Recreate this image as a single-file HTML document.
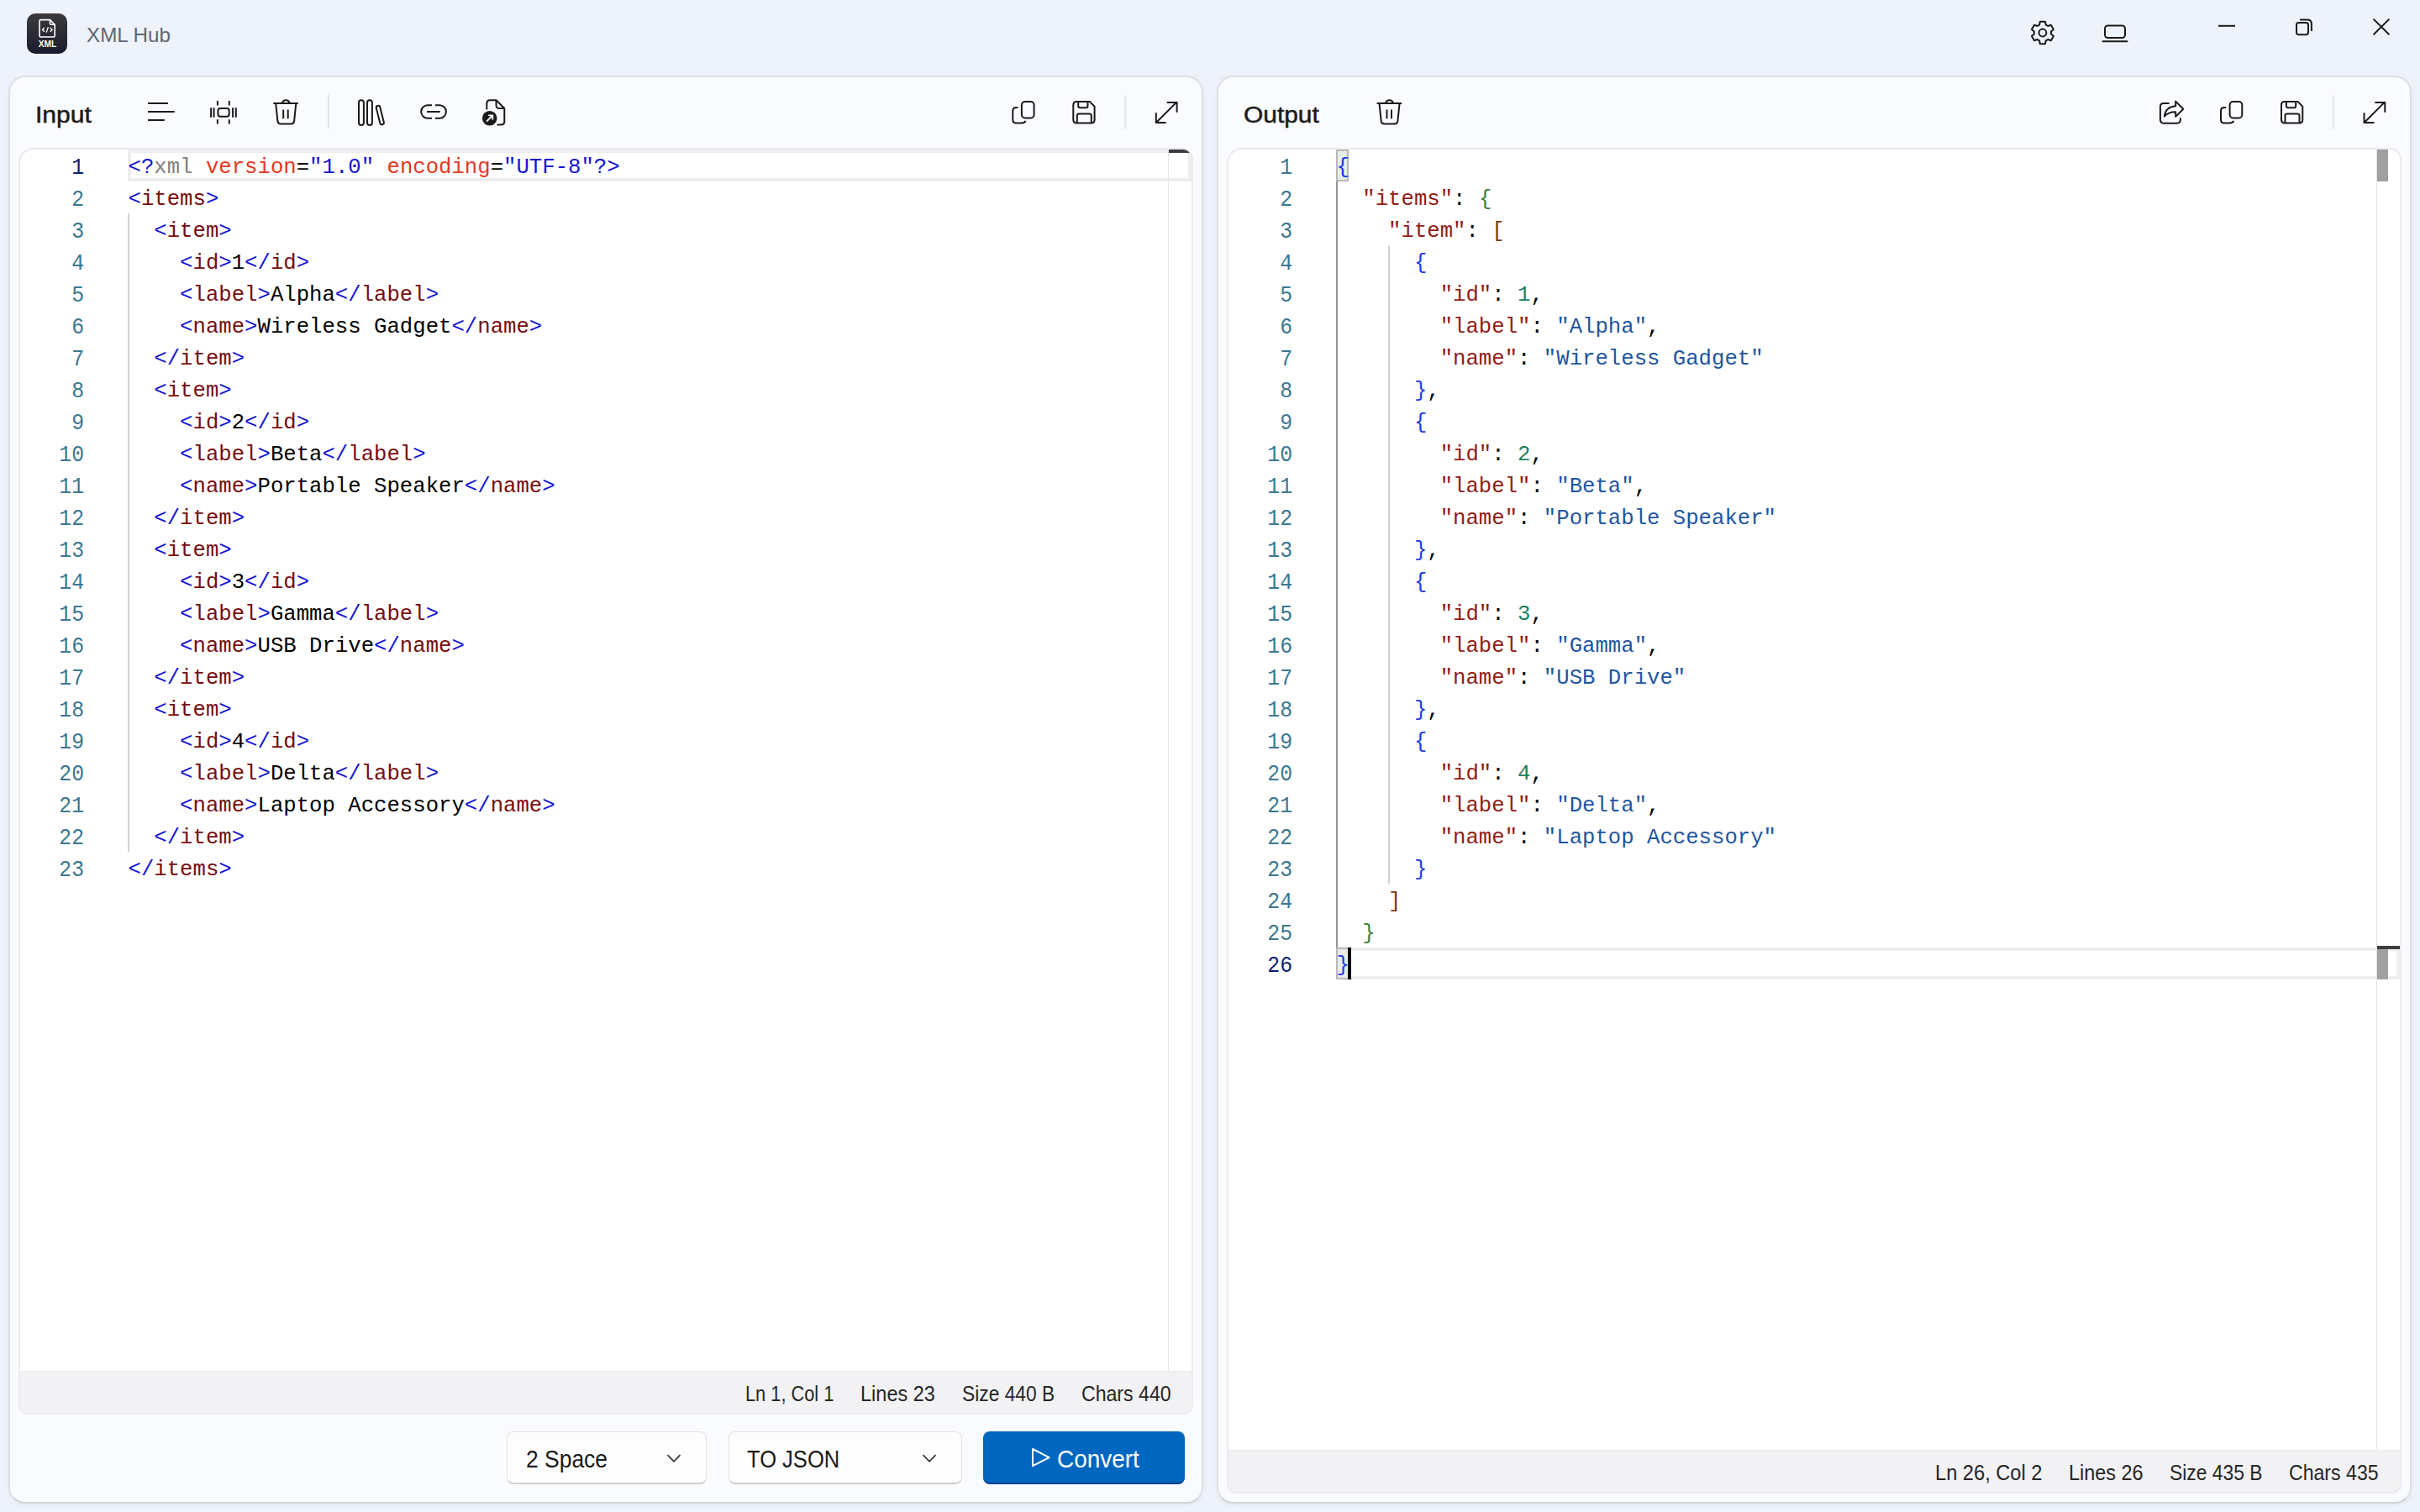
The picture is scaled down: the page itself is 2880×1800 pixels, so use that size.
<!DOCTYPE html>
<html><head><meta charset="utf-8">
<style>
html,body{margin:0;padding:0;}
body{width:2880px;height:1800px;overflow:hidden;position:relative;background:#eef2fa;font-family:"Liberation Sans",sans-serif;}
.abs{position:absolute;}
.panel{position:absolute;top:90px;width:1422px;height:1700px;box-sizing:border-box;background:#fafbfe;border:2px solid #dde0e6;border-bottom-color:#d0d3d8;border-radius:20px;box-shadow:0 2px 5px rgba(0,0,0,0.05);}
.editor{position:absolute;background:#fff;border:2px solid #ebebed;border-radius:18px 14px 12px 12px;overflow:hidden;box-sizing:border-box;}
.status{position:absolute;left:0;right:0;bottom:0;height:49px;background:#f2f2f4;border-top:1px solid #ececee;}
.code{position:absolute;font-family:"Liberation Mono",monospace;font-size:25.67px;white-space:pre;}
.ln{position:absolute;left:0;height:38px;line-height:38px;}
.nums{position:absolute;font-family:"Liberation Mono",monospace;font-size:27.5px;color:#3a7791;transform:scaleX(0.9);transform-origin:100% 0;}
.num{position:absolute;right:0;height:38px;line-height:38px;text-align:right;}
.num.act{color:#0b216f;}
.hdr{position:absolute;font-weight:bold;font-size:27px;color:#1a1a1a;}
.stat{position:absolute;font-size:24px;color:#1f1f1f;white-space:nowrap;}
.dd{position:absolute;top:1704px;height:63px;box-sizing:border-box;background:#fdfdfd;border:1px solid #e3e3e3;border-bottom:2px solid #d0d0d0;border-radius:8px;}
.ddt{position:absolute;font-size:28px;color:#1a1a1a;white-space:nowrap;}
</style></head>
<body>
<!-- title bar -->
<div class="abs" style="left:32px;top:16px;width:48px;height:48px;border-radius:10px;background:linear-gradient(#3a3a3c,#1b1b2e);"></div>

<!-- left panel -->
<div class="panel" style="left:10px;"></div>
<div class="panel" style="left:1448px;"></div>


<!-- left editor -->
<div class="editor" style="left:22px;top:176px;width:1398px;height:1508px;">
  <div class="status"></div>
</div>
<!-- right editor -->
<div class="editor" style="left:1460px;top:176px;width:1398px;height:1602px;">
  <div class="status"></div>
</div>

<!-- left code area -->
<div class="abs" style="left:24px;top:178px;width:1394px;height:1504px;border-radius:16px 10px 10px 10px;overflow:hidden;"><div class="abs" style="left:-24px;top:-178px;width:2880px;height:1800px;">
<div class="abs" style="left:152px;top:178px;width:1266px;height:38px;box-sizing:border-box;border:4px solid #eeeeee;"></div>
<div class="abs" style="left:151.5px;top:254px;width:2px;height:760px;background:#d3d3d3;"></div>
<div class="nums" style="left:41px;top:181px;width:59px;"><div class="num act" style="top:0px">1</div>
<div class="num" style="top:38px">2</div>
<div class="num" style="top:76px">3</div>
<div class="num" style="top:114px">4</div>
<div class="num" style="top:152px">5</div>
<div class="num" style="top:190px">6</div>
<div class="num" style="top:228px">7</div>
<div class="num" style="top:266px">8</div>
<div class="num" style="top:304px">9</div>
<div class="num" style="top:342px">10</div>
<div class="num" style="top:380px">11</div>
<div class="num" style="top:418px">12</div>
<div class="num" style="top:456px">13</div>
<div class="num" style="top:494px">14</div>
<div class="num" style="top:532px">15</div>
<div class="num" style="top:570px">16</div>
<div class="num" style="top:608px">17</div>
<div class="num" style="top:646px">18</div>
<div class="num" style="top:684px">19</div>
<div class="num" style="top:722px">20</div>
<div class="num" style="top:760px">21</div>
<div class="num" style="top:798px">22</div>
<div class="num" style="top:836px">23</div></div>
<div class="code" style="left:152.5px;top:181px;"><div class="ln" style="top:0px"><span style="color:#1414d4">&lt;?</span><span style="color:#808080">xml</span><span style="color:#000000"> </span><span style="color:#e3391f">version</span><span style="color:#000000">=</span><span style="color:#1414d4">&quot;1.0&quot;</span><span style="color:#000000"> </span><span style="color:#e3391f">encoding</span><span style="color:#000000">=</span><span style="color:#1414d4">&quot;UTF-8&quot;</span><span style="color:#1414d4">?&gt;</span></div>
<div class="ln" style="top:38px"><span style="color:#1414d4">&lt;</span><span style="color:#760d0d">items</span><span style="color:#1414d4">&gt;</span></div>
<div class="ln" style="top:76px"><span style="color:#1414d4">  &lt;</span><span style="color:#760d0d">item</span><span style="color:#1414d4">&gt;</span></div>
<div class="ln" style="top:114px"><span style="color:#1414d4">    &lt;</span><span style="color:#760d0d">id</span><span style="color:#1414d4">&gt;</span><span style="color:#000000">1</span><span style="color:#1414d4">&lt;/</span><span style="color:#760d0d">id</span><span style="color:#1414d4">&gt;</span></div>
<div class="ln" style="top:152px"><span style="color:#1414d4">    &lt;</span><span style="color:#760d0d">label</span><span style="color:#1414d4">&gt;</span><span style="color:#000000">Alpha</span><span style="color:#1414d4">&lt;/</span><span style="color:#760d0d">label</span><span style="color:#1414d4">&gt;</span></div>
<div class="ln" style="top:190px"><span style="color:#1414d4">    &lt;</span><span style="color:#760d0d">name</span><span style="color:#1414d4">&gt;</span><span style="color:#000000">Wireless Gadget</span><span style="color:#1414d4">&lt;/</span><span style="color:#760d0d">name</span><span style="color:#1414d4">&gt;</span></div>
<div class="ln" style="top:228px"><span style="color:#1414d4">  &lt;/</span><span style="color:#760d0d">item</span><span style="color:#1414d4">&gt;</span></div>
<div class="ln" style="top:266px"><span style="color:#1414d4">  &lt;</span><span style="color:#760d0d">item</span><span style="color:#1414d4">&gt;</span></div>
<div class="ln" style="top:304px"><span style="color:#1414d4">    &lt;</span><span style="color:#760d0d">id</span><span style="color:#1414d4">&gt;</span><span style="color:#000000">2</span><span style="color:#1414d4">&lt;/</span><span style="color:#760d0d">id</span><span style="color:#1414d4">&gt;</span></div>
<div class="ln" style="top:342px"><span style="color:#1414d4">    &lt;</span><span style="color:#760d0d">label</span><span style="color:#1414d4">&gt;</span><span style="color:#000000">Beta</span><span style="color:#1414d4">&lt;/</span><span style="color:#760d0d">label</span><span style="color:#1414d4">&gt;</span></div>
<div class="ln" style="top:380px"><span style="color:#1414d4">    &lt;</span><span style="color:#760d0d">name</span><span style="color:#1414d4">&gt;</span><span style="color:#000000">Portable Speaker</span><span style="color:#1414d4">&lt;/</span><span style="color:#760d0d">name</span><span style="color:#1414d4">&gt;</span></div>
<div class="ln" style="top:418px"><span style="color:#1414d4">  &lt;/</span><span style="color:#760d0d">item</span><span style="color:#1414d4">&gt;</span></div>
<div class="ln" style="top:456px"><span style="color:#1414d4">  &lt;</span><span style="color:#760d0d">item</span><span style="color:#1414d4">&gt;</span></div>
<div class="ln" style="top:494px"><span style="color:#1414d4">    &lt;</span><span style="color:#760d0d">id</span><span style="color:#1414d4">&gt;</span><span style="color:#000000">3</span><span style="color:#1414d4">&lt;/</span><span style="color:#760d0d">id</span><span style="color:#1414d4">&gt;</span></div>
<div class="ln" style="top:532px"><span style="color:#1414d4">    &lt;</span><span style="color:#760d0d">label</span><span style="color:#1414d4">&gt;</span><span style="color:#000000">Gamma</span><span style="color:#1414d4">&lt;/</span><span style="color:#760d0d">label</span><span style="color:#1414d4">&gt;</span></div>
<div class="ln" style="top:570px"><span style="color:#1414d4">    &lt;</span><span style="color:#760d0d">name</span><span style="color:#1414d4">&gt;</span><span style="color:#000000">USB Drive</span><span style="color:#1414d4">&lt;/</span><span style="color:#760d0d">name</span><span style="color:#1414d4">&gt;</span></div>
<div class="ln" style="top:608px"><span style="color:#1414d4">  &lt;/</span><span style="color:#760d0d">item</span><span style="color:#1414d4">&gt;</span></div>
<div class="ln" style="top:646px"><span style="color:#1414d4">  &lt;</span><span style="color:#760d0d">item</span><span style="color:#1414d4">&gt;</span></div>
<div class="ln" style="top:684px"><span style="color:#1414d4">    &lt;</span><span style="color:#760d0d">id</span><span style="color:#1414d4">&gt;</span><span style="color:#000000">4</span><span style="color:#1414d4">&lt;/</span><span style="color:#760d0d">id</span><span style="color:#1414d4">&gt;</span></div>
<div class="ln" style="top:722px"><span style="color:#1414d4">    &lt;</span><span style="color:#760d0d">label</span><span style="color:#1414d4">&gt;</span><span style="color:#000000">Delta</span><span style="color:#1414d4">&lt;/</span><span style="color:#760d0d">label</span><span style="color:#1414d4">&gt;</span></div>
<div class="ln" style="top:760px"><span style="color:#1414d4">    &lt;</span><span style="color:#760d0d">name</span><span style="color:#1414d4">&gt;</span><span style="color:#000000">Laptop Accessory</span><span style="color:#1414d4">&lt;/</span><span style="color:#760d0d">name</span><span style="color:#1414d4">&gt;</span></div>
<div class="ln" style="top:798px"><span style="color:#1414d4">  &lt;/</span><span style="color:#760d0d">item</span><span style="color:#1414d4">&gt;</span></div>
<div class="ln" style="top:836px"><span style="color:#1414d4">&lt;/</span><span style="color:#760d0d">items</span><span style="color:#1414d4">&gt;</span></div></div>
<div class="abs" style="left:1390px;top:177px;width:1px;height:1455px;background:#e4e4e4;"></div>
<div class="abs" style="left:1391px;top:178px;width:27px;height:4px;background:#3c3c3c;"></div>
</div></div>

<!-- right code area -->
<div class="abs" style="left:1462px;top:178px;width:1394px;height:1598px;border-radius:16px 10px 10px 10px;overflow:hidden;"><div class="abs" style="left:-1462px;top:-178px;width:2880px;height:1800px;">
<div class="abs" style="left:1590px;top:1128px;width:1266px;height:38px;box-sizing:border-box;border:4px solid #eeeeee;"></div>
<div class="abs" style="left:1590px;top:178px;width:15.4px;height:38px;box-sizing:border-box;border:2px solid #b9b9b9;background:#e5efe5;"></div>
<div class="abs" style="left:1590px;top:1128px;width:15.4px;height:38px;box-sizing:border-box;border:2px solid #b9b9b9;border-right-width:0;background:#e7ede7;"></div>
<div class="abs" style="left:1590px;top:216px;width:2px;height:912px;background:#939393;"></div>
<div class="abs" style="left:1651.6px;top:292px;width:2px;height:760px;background:#d3d3d3;"></div>
<div class="nums" style="left:1479px;top:181px;width:59px;"><div class="num" style="top:0px">1</div>
<div class="num" style="top:38px">2</div>
<div class="num" style="top:76px">3</div>
<div class="num" style="top:114px">4</div>
<div class="num" style="top:152px">5</div>
<div class="num" style="top:190px">6</div>
<div class="num" style="top:228px">7</div>
<div class="num" style="top:266px">8</div>
<div class="num" style="top:304px">9</div>
<div class="num" style="top:342px">10</div>
<div class="num" style="top:380px">11</div>
<div class="num" style="top:418px">12</div>
<div class="num" style="top:456px">13</div>
<div class="num" style="top:494px">14</div>
<div class="num" style="top:532px">15</div>
<div class="num" style="top:570px">16</div>
<div class="num" style="top:608px">17</div>
<div class="num" style="top:646px">18</div>
<div class="num" style="top:684px">19</div>
<div class="num" style="top:722px">20</div>
<div class="num" style="top:760px">21</div>
<div class="num" style="top:798px">22</div>
<div class="num" style="top:836px">23</div>
<div class="num" style="top:874px">24</div>
<div class="num" style="top:912px">25</div>
<div class="num act" style="top:950px">26</div></div>
<div class="code" style="left:1590.5px;top:181px;"><div class="ln" style="top:0px"><span style="color:#1c3ae0">{</span></div>
<div class="ln" style="top:38px"><span style="color:#000000">  </span><span style="color:#8f1d16">&quot;items&quot;</span><span style="color:#000000">: </span><span style="color:#3b7f3b">{</span></div>
<div class="ln" style="top:76px"><span style="color:#000000">    </span><span style="color:#8f1d16">&quot;item&quot;</span><span style="color:#000000">: </span><span style="color:#7b3814">[</span></div>
<div class="ln" style="top:114px"><span style="color:#000000">      </span><span style="color:#1c3ae0">{</span></div>
<div class="ln" style="top:152px"><span style="color:#000000">        </span><span style="color:#8f1d16">&quot;id&quot;</span><span style="color:#000000">: </span><span style="color:#1f8060">1</span><span style="color:#000000">,</span></div>
<div class="ln" style="top:190px"><span style="color:#000000">        </span><span style="color:#8f1d16">&quot;label&quot;</span><span style="color:#000000">: </span><span style="color:#1f55a0">&quot;Alpha&quot;</span><span style="color:#000000">,</span></div>
<div class="ln" style="top:228px"><span style="color:#000000">        </span><span style="color:#8f1d16">&quot;name&quot;</span><span style="color:#000000">: </span><span style="color:#1f55a0">&quot;Wireless Gadget&quot;</span></div>
<div class="ln" style="top:266px"><span style="color:#000000">      </span><span style="color:#1c3ae0">}</span><span style="color:#000000">,</span></div>
<div class="ln" style="top:304px"><span style="color:#000000">      </span><span style="color:#1c3ae0">{</span></div>
<div class="ln" style="top:342px"><span style="color:#000000">        </span><span style="color:#8f1d16">&quot;id&quot;</span><span style="color:#000000">: </span><span style="color:#1f8060">2</span><span style="color:#000000">,</span></div>
<div class="ln" style="top:380px"><span style="color:#000000">        </span><span style="color:#8f1d16">&quot;label&quot;</span><span style="color:#000000">: </span><span style="color:#1f55a0">&quot;Beta&quot;</span><span style="color:#000000">,</span></div>
<div class="ln" style="top:418px"><span style="color:#000000">        </span><span style="color:#8f1d16">&quot;name&quot;</span><span style="color:#000000">: </span><span style="color:#1f55a0">&quot;Portable Speaker&quot;</span></div>
<div class="ln" style="top:456px"><span style="color:#000000">      </span><span style="color:#1c3ae0">}</span><span style="color:#000000">,</span></div>
<div class="ln" style="top:494px"><span style="color:#000000">      </span><span style="color:#1c3ae0">{</span></div>
<div class="ln" style="top:532px"><span style="color:#000000">        </span><span style="color:#8f1d16">&quot;id&quot;</span><span style="color:#000000">: </span><span style="color:#1f8060">3</span><span style="color:#000000">,</span></div>
<div class="ln" style="top:570px"><span style="color:#000000">        </span><span style="color:#8f1d16">&quot;label&quot;</span><span style="color:#000000">: </span><span style="color:#1f55a0">&quot;Gamma&quot;</span><span style="color:#000000">,</span></div>
<div class="ln" style="top:608px"><span style="color:#000000">        </span><span style="color:#8f1d16">&quot;name&quot;</span><span style="color:#000000">: </span><span style="color:#1f55a0">&quot;USB Drive&quot;</span></div>
<div class="ln" style="top:646px"><span style="color:#000000">      </span><span style="color:#1c3ae0">}</span><span style="color:#000000">,</span></div>
<div class="ln" style="top:684px"><span style="color:#000000">      </span><span style="color:#1c3ae0">{</span></div>
<div class="ln" style="top:722px"><span style="color:#000000">        </span><span style="color:#8f1d16">&quot;id&quot;</span><span style="color:#000000">: </span><span style="color:#1f8060">4</span><span style="color:#000000">,</span></div>
<div class="ln" style="top:760px"><span style="color:#000000">        </span><span style="color:#8f1d16">&quot;label&quot;</span><span style="color:#000000">: </span><span style="color:#1f55a0">&quot;Delta&quot;</span><span style="color:#000000">,</span></div>
<div class="ln" style="top:798px"><span style="color:#000000">        </span><span style="color:#8f1d16">&quot;name&quot;</span><span style="color:#000000">: </span><span style="color:#1f55a0">&quot;Laptop Accessory&quot;</span></div>
<div class="ln" style="top:836px"><span style="color:#000000">      </span><span style="color:#1c3ae0">}</span></div>
<div class="ln" style="top:874px"><span style="color:#000000">    </span><span style="color:#7b3814">]</span></div>
<div class="ln" style="top:912px"><span style="color:#000000">  </span><span style="color:#3b7f3b">}</span></div>
<div class="ln" style="top:950px"><span style="color:#1c3ae0">}</span></div></div>
<div class="abs" style="left:1604px;top:1128px;width:4px;height:38px;background:#000;"></div>
<div class="abs" style="left:2828px;top:177px;width:1px;height:1549px;background:#e4e4e4;"></div>
<div class="abs" style="left:2829px;top:178px;width:13px;height:38px;background:#a0a0a0;"></div>
<div class="abs" style="left:2829px;top:1130px;width:13px;height:36px;background:#a0a0a0;"></div>
<div class="abs" style="left:2829px;top:1126px;width:27px;height:4px;background:#3c3c3c;"></div>
</div></div>

<!-- status texts -->


<!-- bottom controls -->
<div class="dd" style="left:603px;width:238px;"></div>
<div class="dd" style="left:867px;width:278px;"></div>
<div class="abs" style="left:1170px;top:1704px;width:240px;height:63px;box-sizing:border-box;background:#0067c0;border-radius:8px;border-bottom:2px solid #003f8a;"></div>

<div id="t_title" class="abs" style="left:103.20px;top:29.95px;font-size:24.50px;font-weight:normal;color:#5f6670;white-space:nowrap;line-height:1;transform:scaleX(0.9879);transform-origin:0 0;">XML Hub</div>
<div id="t_in" class="abs" style="left:42.20px;top:123.50px;font-size:27.00px;font-weight:normal;color:#1b1b1b;white-space:nowrap;line-height:1;transform:scaleX(1.1139);transform-origin:0 0;-webkit-text-stroke:0.50px #1b1b1b;">Input</div>
<div id="t_out" class="abs" style="left:1480.00px;top:124.10px;font-size:27.00px;font-weight:normal;color:#1b1b1b;white-space:nowrap;line-height:1;transform:scaleX(1.1079);transform-origin:0 0;-webkit-text-stroke:0.50px #1b1b1b;">Output</div>
<div id="s1" class="abs" style="left:887.00px;top:1646.70px;font-size:25.00px;font-weight:normal;color:#262626;white-space:nowrap;line-height:1;transform:scaleX(0.8712);transform-origin:0 0;">Ln 1, Col 1</div>
<div id="s2" class="abs" style="left:1024.00px;top:1646.70px;font-size:25.00px;font-weight:normal;color:#262626;white-space:nowrap;line-height:1;transform:scaleX(0.9407);transform-origin:0 0;">Lines 23</div>
<div id="s3" class="abs" style="left:1145.00px;top:1646.70px;font-size:25.00px;font-weight:normal;color:#262626;white-space:nowrap;line-height:1;transform:scaleX(0.9110);transform-origin:0 0;">Size 440 B</div>
<div id="s4" class="abs" style="left:1286.60px;top:1646.70px;font-size:25.00px;font-weight:normal;color:#262626;white-space:nowrap;line-height:1;transform:scaleX(0.9239);transform-origin:0 0;">Chars 440</div>
<div id="r1" class="abs" style="left:2303.20px;top:1740.50px;font-size:25.00px;font-weight:normal;color:#262626;white-space:nowrap;line-height:1;transform:scaleX(0.9455);transform-origin:0 0;">Ln 26, Col 2</div>
<div id="r2" class="abs" style="left:2462.00px;top:1740.50px;font-size:25.00px;font-weight:normal;color:#262626;white-space:nowrap;line-height:1;transform:scaleX(0.9363);transform-origin:0 0;">Lines 26</div>
<div id="r3" class="abs" style="left:2582.40px;top:1740.50px;font-size:25.00px;font-weight:normal;color:#262626;white-space:nowrap;line-height:1;transform:scaleX(0.9143);transform-origin:0 0;">Size 435 B</div>
<div id="r4" class="abs" style="left:2724.00px;top:1740.50px;font-size:25.00px;font-weight:normal;color:#262626;white-space:nowrap;line-height:1;transform:scaleX(0.9239);transform-origin:0 0;">Chars 435</div>
<div id="d1" class="abs" style="left:626.00px;top:1722.50px;font-size:29.00px;font-weight:normal;color:#1a1a1a;white-space:nowrap;line-height:1;transform:scaleX(0.9116);transform-origin:0 0;">2 Space</div>
<div id="d2" class="abs" style="left:889.40px;top:1722.50px;font-size:29.00px;font-weight:normal;color:#1a1a1a;white-space:nowrap;line-height:1;transform:scaleX(0.8804);transform-origin:0 0;">TO JSON</div>
<div id="d3" class="abs" style="left:1257.80px;top:1722.90px;font-size:29.00px;font-weight:normal;color:#ffffff;white-space:nowrap;line-height:1;transform:scaleX(0.9637);transform-origin:0 0;">Convert</div>
<svg class="abs" style="left:0;top:0;" width="2880" height="1800" viewBox="0 0 2880 1800" fill="none" stroke="#1a1a1a" stroke-width="2" stroke-linejoin="round">
<!-- app icon glyph -->
<g stroke="#fff" stroke-width="1.6">
<path d="M47 25 Q47 23.6 48.4 23.6 H59.5 L65.2 29.3 V42.6 Q65.2 44 63.8 44 H48.4 Q47 44 47 42.6 Z"/>
<path d="M59.5 23.6 V27.8 Q59.5 29.3 61 29.3 H65.2"/>
<path d="M53 33 L50.4 35.4 L53 37.8 M59.6 33 L62.2 35.4 L59.6 37.8 M57.4 32.2 L55.2 38.6" stroke-width="1.3"/>
</g>
<text x="56.5" y="55.6" fill="#fff" stroke="none" font-family="Liberation Sans" font-weight="bold" font-size="10.2" text-anchor="middle">XML</text>

<!-- title bar icons -->
<path d="M2427.08 29.54 L2427.84 25.75 L2433.96 25.75 L2434.72 29.54 L2437.18 30.96 L2440.85 29.72 L2443.91 35.02 L2441.00 37.58 L2441.00 40.42 L2443.91 42.98 L2440.85 48.28 L2437.18 47.04 L2434.72 48.46 L2433.96 52.25 L2427.84 52.25 L2427.08 48.46 L2424.62 47.04 L2420.95 48.28 L2417.89 42.98 L2420.80 40.42 L2420.80 37.58 L2417.89 35.02 L2420.95 29.72 L2424.62 30.96 Z"/>
<circle cx="2430.9" cy="39" r="4.4"/>
<rect x="2505" y="30.5" width="24" height="14.6" rx="3.5"/>
<path d="M2502.5 49.3 H2531.5" stroke-linecap="round"/>
<path d="M2640 30.8 H2660"/>
<rect x="2733" y="27" width="14" height="14.2" rx="2.6"/>
<path d="M2737 23.4 H2746 Q2750.9 23.4 2750.9 28.3 V37"/>
<path d="M2824.6 22.6 L2843.4 41.3 M2843.4 22.6 L2824.6 41.3"/>

<!-- left header icons -->
<path d="M176 123 H200 M176 133 H207.7 M176 143 H195.8"/>
<g>
<path d="M258.9 120.1 V125.6 M272.8 120.1 V125.6 M258.9 142.3 V147.6 M272.8 142.3 V147.6"/>
<path d="M251.1 128.2 V139.8 M254.6 128.2 V139.8 M277.1 128.2 V139.8 M280.8 128.2 V139.8"/>
<rect x="259.5" y="128.9" width="13.2" height="9.8" rx="2.6"/>
</g>
<g>
<path d="M325.3 123 H354.8"/>
<path d="M335.9 123 A4.4 4.4 0 0 1 344.6 123"/>
<path d="M328.2 123 L330.4 144.2 Q330.8 147.6 334.2 147.6 H346.3 Q349.7 147.6 350.1 144.2 L352.3 123"/>
<path d="M337.2 130.4 V141.2 M342.7 130.4 V141.2"/>
</g>
<rect x="390" y="113" width="2" height="40" fill="#e1e4e9" stroke="none"/>
<rect x="427" y="119.2" width="5.9" height="29.7" rx="2.9"/>
<rect x="437" y="119.2" width="5.9" height="29.7" rx="2.9"/>
<rect x="450" y="125.6" width="4.6" height="23" rx="2.2" transform="rotate(-14 452.3 137.1)"/>
<path d="M514 125.3 H508.9 A7.7 7.7 0 0 0 508.9 140.7 H514 M518 125.3 H523.2 A7.7 7.7 0 0 1 523.2 140.7 H518"/>
<path d="M508 133 H523.7"/>
<path d="M579.3 130.5 V123.2 Q579.3 119.2 583.3 119.2 H590.5 L600.3 129 V144.6 Q600.3 148.6 596.3 148.6 H591.6"/>
<path d="M590.5 119.2 V125.2 Q590.5 129 594.3 129 H600.3"/>
<circle cx="582.7" cy="140.8" r="8.8" fill="#1a1a1a" stroke="none"/>
<path d="M579.2 144.5 L586 137.7 M581.2 137.4 H586.3 V142.5" stroke="#fff" stroke-width="1.8" stroke-linejoin="miter"/>

<g>
<rect x="1215.9" y="121.1" width="14.7" height="19.4" rx="4"/>
<path d="M1211.4 128.1 H1209.3 Q1205.3 128.1 1205.3 132.1 V142.5 Q1205.3 146.5 1209.3 146.5 H1215.6 Q1219.4 146.5 1220.6 143.8"/>
<path d="M1281.3 121.1 H1297 L1302.6 126.7 V142.5 Q1302.6 146.5 1298.6 146.5 H1281.3 Q1277.3 146.5 1277.3 142.5 V125.1 Q1277.3 121.1 1281.3 121.1 Z"/>
<path d="M1283.2 121.1 V126 Q1283.2 128.2 1285.4 128.2 H1292.3 Q1294.5 128.2 1294.5 126 V121.1"/>
<path d="M1281.8 146.5 V137.6 Q1281.8 135.4 1284 135.4 H1296.6 Q1298.8 135.4 1298.8 137.6 V146.5"/>
<rect x="1338.2" y="113.8" width="2" height="40" fill="#e1e4e9" stroke="none"/>
<path d="M1375.9 146 L1400.5 121.4 M1388.7 121.9 H1400.6 V133.7 M1375.8 134.2 V146.1 H1387.7" stroke-linejoin="miter"/>
</g>

<!-- right header icons -->
<g transform="translate(1313.3 0)">
<path d="M325.3 123 H354.8"/>
<path d="M335.9 123 A4.4 4.4 0 0 1 344.6 123"/>
<path d="M328.2 123 L330.4 144.2 Q330.8 147.6 334.2 147.6 H346.3 Q349.7 147.6 350.1 144.2 L352.3 123"/>
<path d="M337.2 130.4 V141.2 M342.7 130.4 V141.2"/>
</g>
<g transform="translate(1437.7 0)">
<rect x="1215.9" y="121.1" width="14.7" height="19.4" rx="4"/>
<path d="M1211.4 128.1 H1209.3 Q1205.3 128.1 1205.3 132.1 V142.5 Q1205.3 146.5 1209.3 146.5 H1215.6 Q1219.4 146.5 1220.6 143.8"/>
<path d="M1281.3 121.1 H1297 L1302.6 126.7 V142.5 Q1302.6 146.5 1298.6 146.5 H1281.3 Q1277.3 146.5 1277.3 142.5 V125.1 Q1277.3 121.1 1281.3 121.1 Z"/>
<path d="M1283.2 121.1 V126 Q1283.2 128.2 1285.4 128.2 H1292.3 Q1294.5 128.2 1294.5 126 V121.1"/>
<path d="M1281.8 146.5 V137.6 Q1281.8 135.4 1284 135.4 H1296.6 Q1298.8 135.4 1298.8 137.6 V146.5"/>
<rect x="1338.2" y="113.8" width="2" height="40" fill="#e1e4e9" stroke="none"/>
<path d="M1375.9 146 L1400.5 121.4 M1388.7 121.9 H1400.6 V133.7 M1375.8 134.2 V146.1 H1387.7" stroke-linejoin="miter"/>
</g>
<path d="M2581.6 122.9 H2575 Q2570.9 122.9 2570.9 127 V142.6 Q2570.9 146.7 2575 146.7 H2590.8 Q2594.9 146.7 2594.9 142.6 V140.3"/>
<path d="M2589.2 120.6 L2598.3 129.8 L2589.2 138.9 V133.3 Q2580.5 133.2 2575.8 138.6 Q2577.3 127.2 2589.2 126.3 Z"/>

<!-- bottom -->
<path d="M794.5 1732.2 L802 1739.8 L809.5 1732.2" stroke="#333" stroke-width="1.7" stroke-linejoin="miter"/>
<path d="M1098.5 1732.2 L1106 1739.8 L1113.5 1732.2" stroke="#333" stroke-width="1.7" stroke-linejoin="miter"/>
<path d="M1229 1725 V1745.2 L1248.6 1735.1 Z" stroke="#fff" stroke-width="2"/>
</svg>
</body></html>
